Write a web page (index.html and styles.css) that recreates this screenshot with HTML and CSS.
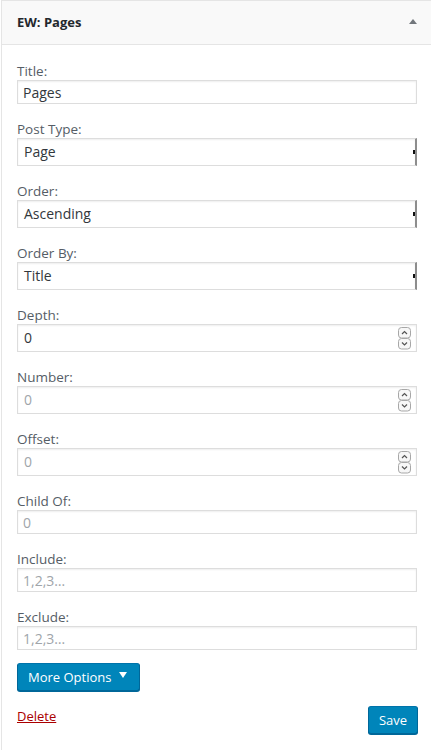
FILE: index.html
```html
<!DOCTYPE html>
<html lang="en">
<head>
<meta charset="utf-8">
<title>EW: Pages</title>
<link rel="stylesheet" href="styles.css">
</head>
<body>
<div class="widget">
  <div class="widget-top">
    <h3 class="widget-title">EW: Pages</h3>
    <span class="toggle"></span>
  </div>
  <div class="widget-inside">
    <div class="fields">
      <div class="field">
        <label class="lbl">Title:</label>
        <input class="txt" type="text" value="Pages">
      </div>
      <div class="field">
        <label class="lbl">Post Type:</label>
        <div class="sel">Page</div>
      </div>
      <div class="field">
        <label class="lbl">Order:</label>
        <div class="sel">Ascending</div>
      </div>
      <div class="field">
        <label class="lbl">Order By:</label>
        <div class="sel">Title</div>
      </div>
      <div class="field">
        <label class="lbl">Depth:</label>
        <div class="num">
          <span class="num-val">0</span>
          <svg class="spin" width="13" height="23" viewBox="0 0 13 23"><rect x="0.5" y="0.5" width="12" height="10.5" rx="3" fill="#f7f7f7" stroke="#a7a7a7"/><rect x="0.5" y="11.5" width="12" height="10.5" rx="3" fill="#f7f7f7" stroke="#a7a7a7"/><path d="M4 7 L6.5 4.5 L9 7" fill="none" stroke="#555" stroke-width="1.2"/><path d="M4 15.5 L6.5 18 L9 15.5" fill="none" stroke="#555" stroke-width="1.2"/></svg>
        </div>
      </div>
      <div class="field">
        <label class="lbl">Number:</label>
        <div class="num">
          <span class="num-val ph">0</span>
          <svg class="spin" width="13" height="23" viewBox="0 0 13 23"><rect x="0.5" y="0.5" width="12" height="10.5" rx="3" fill="#f7f7f7" stroke="#a7a7a7"/><rect x="0.5" y="11.5" width="12" height="10.5" rx="3" fill="#f7f7f7" stroke="#a7a7a7"/><path d="M4 7 L6.5 4.5 L9 7" fill="none" stroke="#555" stroke-width="1.2"/><path d="M4 15.5 L6.5 18 L9 15.5" fill="none" stroke="#555" stroke-width="1.2"/></svg>
        </div>
      </div>
      <div class="field">
        <label class="lbl">Offset:</label>
        <div class="num">
          <span class="num-val ph">0</span>
          <svg class="spin" width="13" height="23" viewBox="0 0 13 23"><rect x="0.5" y="0.5" width="12" height="10.5" rx="3" fill="#f7f7f7" stroke="#a7a7a7"/><rect x="0.5" y="11.5" width="12" height="10.5" rx="3" fill="#f7f7f7" stroke="#a7a7a7"/><path d="M4 7 L6.5 4.5 L9 7" fill="none" stroke="#555" stroke-width="1.2"/><path d="M4 15.5 L6.5 18 L9 15.5" fill="none" stroke="#555" stroke-width="1.2"/></svg>
        </div>
      </div>
      <div class="field">
        <label class="lbl">Child Of:</label>
        <input class="txt" type="text" placeholder="0">
      </div>
      <div class="field">
        <label class="lbl">Include:</label>
        <input class="txt" type="text" placeholder="1,2,3…">
      </div>
      <div class="field">
        <label class="lbl">Exclude:</label>
        <input class="txt" type="text" placeholder="1,2,3…">
      </div>
    </div>
    <button class="btn more">More Options <span class="caret"></span></button>
    <div class="actions">
      <a class="delete" href="#">Delete</a>
      <button class="btn save">Save</button>
    </div>
  </div>
</div>
</body>
</html>
```
FILE: styles.css
```css
html, body {
  margin: 0;
  padding: 0;
  overflow: hidden;
  background: #ffffff;
}
body {
  font-family: "Open Sans", "DejaVu Sans", sans-serif;
  font-size: 13px;
  color: #444;
}
.widget {
  margin-left: 1px;
  width: 433px;
  box-sizing: border-box;
  border: 1px solid #e5e5e5;
  background: #fff;
}
.widget-top {
  height: 43px;
  background: #f9f9f9;
  border-bottom: 1px solid #e5e5e5;
  display: flex;
  align-items: center;
  justify-content: space-between;
  padding: 0 16px 0 15px;
}
.widget-title {
  margin: 0;
  font-size: 13px;
  font-weight: 700;
  color: #23282d;
  line-height: 18px;
  padding-bottom: 1px;
}
.toggle {
  width: 0;
  height: 0;
  border-left: 4px solid transparent;
  border-right: 4px solid transparent;
  border-bottom: 5px solid #72777c;
  margin-bottom: 3px;
}
.widget-inside {
  padding: 18px 15px 20px 15px;
}
.fields {
  display: flex;
  flex-direction: column;
  gap: 17px;
}
.lbl {
  display: block;
  height: 17px;
  line-height: 17px;
  color: #555d66;
  font-size: 13.5px;
}
.txt {
  display: block;
  box-sizing: border-box;
  width: 400px;
  height: 24px;
  margin: 0;
  border: 1px solid #ddd;
  box-shadow: inset 0 1px 2px rgba(0,0,0,0.07);
  padding: 0 5px;
  font-family: inherit;
  font-size: 14px;
  color: #32373c;
  background: #fff;
  outline: none;
}
.txt::placeholder {
  color: #a0a5aa;
  opacity: 1;
}
.sel {
  box-sizing: border-box;
  width: 400px;
  height: 28px;
  border: 1px solid #ddd;
  border-right: 2px solid #8d8d8d;
  box-shadow: inset 0 1px 2px rgba(0,0,0,0.07);
  padding: 0 6px;
  line-height: 26px;
  font-size: 14px;
  color: #32373c;
  background-image: linear-gradient(#111, #111);
  background-repeat: no-repeat;
  background-size: 2px 4px;
  background-position: right 0 center;
}
.num {
  position: relative;
  box-sizing: border-box;
  width: 400px;
  height: 28px;
  border: 1px solid #ddd;
  box-shadow: inset 0 1px 2px rgba(0,0,0,0.07);
  padding: 0 6px;
  line-height: 26px;
  font-size: 14px;
  color: #32373c;
}
.num-val.ph {
  color: #a0a5aa;
}
.spin {
  position: absolute;
  right: 5px;
  top: 2px;
}
.btn {
  font-family: inherit;
  color: #fff;
  background: #0085ba;
  border: 1px solid #0073aa;
  border-color: #0073aa #006799 #006799;
  border-radius: 3px;
  box-shadow: 0 1px 0 #006799;
  height: 28px;
  padding: 0 10px;
  font-size: 13px;
  line-height: 26px;
  cursor: pointer;
  margin: 0;
}
.more {
  display: flex;
  align-items: center;
  gap: 8px;
  width: 123px;
  padding: 0 10px;
  margin-top: 13px;
}
.caret {
  width: 0;
  height: 0;
  border-left: 4px solid transparent;
  border-right: 4px solid transparent;
  border-top: 6px solid #fff;
  margin-bottom: 4px;
}
.actions {
  display: flex;
  justify-content: space-between;
  align-items: flex-start;
  margin-top: 15px;
}
.delete {
  color: #a00;
  text-decoration: underline;
  font-size: 13px;
  line-height: 18px;
  margin-top: 1px;
}
.save {
  width: 50px;
  padding: 0;
  font-size: 13px;
}
```
